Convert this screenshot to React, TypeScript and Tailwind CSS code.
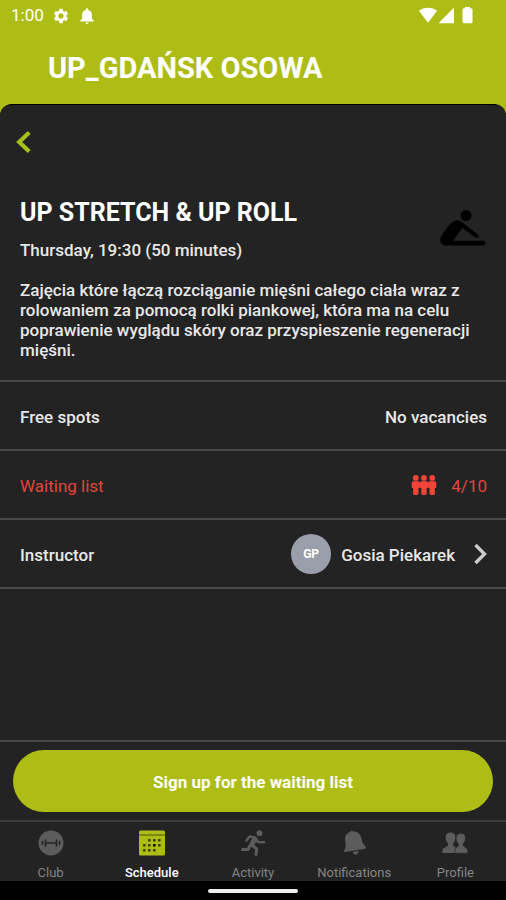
import type { ReactNode } from "react";
import clsx from "clsx";

// --- Icons ---
const GearIcon = () => (
  <svg viewBox="0 0 24 24" className="size-[18px]" fill="currentColor" aria-hidden="true">
    <path d="M19.14 12.94c.04-.3.06-.61.06-.94 0-.32-.02-.64-.07-.94l2.03-1.58a.49.49 0 0 0 .12-.61l-1.92-3.32a.49.49 0 0 0-.59-.22l-2.39.96c-.5-.38-1.03-.7-1.62-.94l-.36-2.54a.48.48 0 0 0-.48-.41h-3.84a.47.47 0 0 0-.47.41l-.36 2.54c-.59.24-1.13.57-1.62.94l-2.39-.96a.48.48 0 0 0-.59.22L2.74 8.87a.48.48 0 0 0 .12.61l2.03 1.58c-.05.3-.09.63-.09.94s.02.64.07.94l-2.03 1.58a.49.49 0 0 0-.12.61l1.92 3.32c.12.22.37.29.59.22l2.39-.96c.5.38 1.03.7 1.62.94l.36 2.54c.05.24.24.41.48.41h3.84c.24 0 .44-.17.47-.41l.36-2.54c.59-.24 1.13-.56 1.62-.94l2.39.96c.22.08.47 0 .59-.22l1.92-3.32a.48.48 0 0 0-.12-.61zM12 15.6A3.61 3.61 0 0 1 8.4 12c0-1.98 1.62-3.6 3.6-3.6s3.6 1.62 3.6 3.6-1.62 3.6-3.6 3.6z" />
  </svg>
);

const StatusBellIcon = () => (
  <svg viewBox="0 0 24 24" className="size-[18px]" fill="currentColor" aria-hidden="true">
    <path d="M12 22.500c1.200 0 2.200-.9 2.200-2H9.800c0 1.100 1 2 2.200 2zM18.500 15.500V10.500c0-3.200-1.800-5.700-4.800-6.400V3.500c0-.9-.8-1.700-1.700-1.700s-1.700.8-1.700 1.700v.6c-3 .7-4.800 3.200-4.800 6.400v5L3 18v1.300h18V18z" />
  </svg>
);

const SignalIcons = () => (
  <svg viewBox="0 0 56 18" className="h-[18px] w-14" fill="currentColor" aria-hidden="true">
    <path d="M0 4C5-.3 13-.3 18 4L9 15.800z" />
    <path d="M35 .5v15.800H19.500z" />
    <path d="M46 0h5v1.200h1q1.500 0 1.500 1.800v11.700q0 1.600-1.600 1.600h-6.800q-1.600 0-1.600-1.600V3q0-1.800 1.500-1.800h1z" />
  </svg>
);

const StretchIcon = () => (
  <svg viewBox="0 0 46 36" className="h-9 w-[46px] text-black" fill="currentColor" aria-hidden="true">
    <circle cx="26" cy="5.500" r="5.500" />
    <path d="M14.500 11q3.500-1.600 6.500.6L38 24.500q1.400 1.500.2 2.800t-3 .3L22.500 18 13 30.700h30.500q2 0 2 2.400T43.500 35.500H5.500Q2 35.500.8 32.500T1 26.500L9 15.200Q11.500 12.200 14.500 11z" />
  </svg>
);

const PeopleIcon = () => (
  <svg viewBox="0 0 26 20" className="h-5 w-[26px]" fill="currentColor" aria-hidden="true">
    {[4.8, 13, 21.2].map((x) => (
      <g key={x} transform={`translate(${x} 0)`}>
        <circle cx="0" cy="2.900" r="2.900" />
        <path d="M-2.600 6.300h5.200q1.500.2 1.500 2v3.600q0 1-.7 1h-.7v5.200q0 1.900-1.300 1.900H-1.400q-1.300 0-1.300-1.900v-5.200h-.7q-.7 0-.7-1V8.300q0-1.800 1.500-2z" />
      </g>
    ))}
  </svg>
);

const ClubIcon = () => (
  <svg viewBox="0 0 26 26" className="size-[26px]" aria-hidden="true">
    <circle cx="13" cy="13" r="12.500" fill="currentColor" />
    <path d="M4.500 11.500v3M7.500 10v6M18.500 10v6M21.500 11.500v3M7.500 13h11" stroke="#232323" strokeWidth="1.600" strokeLinecap="round" />
  </svg>
);

// Dots of the calendar: column and row
const calendarDots = [
  [2, 0], [3, 0], [4, 0],
  [1, 1], [2, 1], [3, 1], [4, 1],
  [1, 2], [2, 2], [3, 2],
];

const CalendarIcon = () => (
  <svg viewBox="0 0 26 26" className="size-[26px]" aria-hidden="true">
    <rect y=".5" width="26" height="25" rx="1.500" fill="currentColor" />
    <path d="M0 5h26" stroke="#4d560c" strokeWidth="1" />
    {calendarDots.map(([col, row]) => (
      <rect
        key={`${col}-${row}`}
        x={col * 5 - 1}
        y={9 + row * 5}
        width="2.600"
        height="2.600"
        rx=".6"
        fill={col === 3 && row === 1 ? "#000000" : "#39400c"}
      />
    ))}
  </svg>
);

const RunIcon = () => (
  <svg viewBox="0 0 26 26" className="size-[26px]" aria-hidden="true">
    <circle cx="19.500" cy="3.200" r="2.900" fill="currentColor" />
    <g fill="none" stroke="currentColor" strokeLinecap="round" strokeLinejoin="round">
      <path d="M6.500 10.500L9.500 6.500 15 7.500l3 4.500 6 .2" strokeWidth="2.500" />
      <path d="M14.500 9L12 14.500" strokeWidth="5" />
      <path d="M12.500 15.500l4.200 3.500-.7 5.500M10 15.500L8 19.500H2.500" strokeWidth="3" />
    </g>
  </svg>
);

const BellIcon = () => (
  <svg viewBox="0 0 26 26" className="size-[26px]" fill="currentColor" aria-hidden="true">
    <g transform="rotate(-10 13 13)">
      <path d="M12.500.6q1.700 0 2 1c4.300.7 6.700 3.900 6.700 8.400 0 4.700.8 6.500 2.500 8.200.7.700.4 2.300-.7 2.300H3c-1.100 0-1.400-1.600-.7-2.300 1.700-1.700 2.300-3.500 2.300-8.200 0-4.500 1.900-7.700 5.900-8.400q.3-1 2-1z" />
      <path d="M10 21.500h6q-.6 3.500-3 3.500t-3-3.500z" />
    </g>
  </svg>
);

const ProfileIcon = () => (
  <svg viewBox="0 0 26 26" className="size-[26px]" fill="currentColor" aria-hidden="true">
    <path d="M8.500 2.500c3.500 0 5 2.200 4.900 5.200-.1 2.500-1 4.500-2.200 5.700v2.200c.6 1 3 1.400 3 3.600V23H.5v-2.500c0-3.200 4.700-3.200 5.500-4.900v-2.200C4.800 12.200 3.800 10.200 3.700 7.700c-.1-3 1.300-5.200 4.800-5.200z" />
    <path d="M18.800 3.200c3.500 0 4.800 2.100 4.700 5.200-.1 2.400-1 4.200-2.200 5.300v2c.7 1.600 4.500 1.800 4.500 4.800V23.300H12.800v-2.800c0-2.800 2.900-3.200 3.500-4.800v-2c-1.200-1.100-2.100-2.900-2.200-5.300-.1-3.100 1.200-5.200 4.700-5.200z" stroke="#232323" strokeWidth=".6" />
  </svg>
);

// --- Helper Types & Data ---
interface Tab {
  label: string;
  icon: ReactNode;
}

const tabs: Tab[] = [
  { label: "Club", icon: <ClubIcon /> },
  { label: "Schedule", icon: <CalendarIcon /> },
  { label: "Activity", icon: <RunIcon /> },
  { label: "Notifications", icon: <BellIcon /> },
  { label: "Profile", icon: <ProfileIcon /> },
];

const ACTIVE_TAB = "Schedule";

const rowClass =
  "flex h-[69px] w-full items-center justify-between border-b-2 border-[#484848] pr-[19px] pl-5";

// --- Main Component ---
export default function App() {
  return (
    <div className="flex min-h-screen flex-col bg-[#adbd16] font-[Roboto,sans-serif] text-[17px] text-[#e8e8e8]">
      {/* Status bar */}
      <div className="flex h-8 items-center justify-between pr-[31px] pl-[11px] text-white">
        <div className="flex items-center gap-2">
          <span>1:00</span>
          <GearIcon />
          <StatusBellIcon />
        </div>
        <SignalIcons />
      </div>

      <header className="flex h-[72px] items-center px-12 pt-0.5 text-white">
        <h1 className="text-[29px] font-bold">UP_GDAŃSK OSOWA</h1>
      </header>

      <main className="flex flex-1 flex-col rounded-t-xl border-t border-black bg-[#232323]">
        <button type="button" aria-label="Back" className="mt-6 ml-4 w-fit text-[#a4c11b]">
          <svg viewBox="0 0 16 26" className="h-[26px] w-4" fill="none" stroke="currentColor" strokeWidth="4.200" aria-hidden="true">
            <path d="M13.200 3.500L3.200 13l10 9.500" />
          </svg>
        </button>

        <section className="border-b-2 border-[#484848] px-5 pt-[42px] pb-5">
          <div className="flex justify-between">
            <div>
              <h2 className="text-[25px] leading-8 font-bold text-white">UP STRETCH &amp; UP ROLL</h2>
              <p className="mt-[11px] leading-5 font-medium">Thursday, 19:30 (50 minutes)</p>
            </div>
            <div className="mt-[13px]">
              <StretchIcon />
            </div>
          </div>
          <p className="mt-5 leading-5 font-medium">
            Zajęcia które łączą rozciąganie mięśni całego ciała wraz z rolowaniem za pomocą rolki
            piankowej, która ma na celu poprawienie wyglądu skóry oraz przyspieszenie regeneracji
            mięśni.
          </p>
        </section>

        <div className={clsx(rowClass, "pt-1 font-medium")}>
          <span>Free spots</span>
          <span>No vacancies</span>
        </div>
        <div className={clsx(rowClass, "pt-1 text-[#e2453c]")}>
          <span>Waiting list</span>
          <span className="flex items-center gap-3.5">
            <span className="pb-1 text-[#f04438]">
              <PeopleIcon />
            </span>
            4/10
          </span>
        </div>
        <button type="button" className={clsx(rowClass, "font-medium")}>
          <span className="pt-1">Instructor</span>
          <span className="flex items-center">
            <span className="flex size-10 items-center justify-center rounded-full bg-[#9b9fab] text-xs font-bold text-white">
              GP
            </span>
            <span className="ml-2.5 pt-1">Gosia Piekarek</span>
            <svg viewBox="0 0 14 22" className="ml-[18px] h-[22px] w-3.5" fill="none" stroke="#cccccc" strokeWidth="3.400" aria-hidden="true">
              <path d="M2.500 2l9 9-9 9" />
            </svg>
          </span>
        </button>

        <div className="mt-auto border-t-2 border-[#484848] px-[13px] pt-2 pb-2">
          <button type="button" className="h-[62px] w-full rounded-full bg-[#adbd16] pt-1 font-bold text-white">
            Sign up for the waiting list
          </button>
        </div>
      </main>

      {/* Bottom tabs */}
      <nav className="grid h-[61px] grid-cols-5 border-t-2 border-[#3c3c3c] bg-[#232323]">
        {tabs.map(({ label, icon }) => (
          <a
            key={label}
            href="#"
            className={clsx(
              "flex flex-col items-center gap-2 pt-2 text-[13px] leading-[18px]",
              label === ACTIVE_TAB ? "font-medium text-white" : "text-[#848484]"
            )}
          >
            <span className={label === ACTIVE_TAB ? "text-[#adbd16]" : "text-[#5c5c5c]"}>{icon}</span>
            {label}
          </a>
        ))}
      </nav>

      <div className="flex h-[19px] items-center justify-center bg-black">
        <div className="h-1 w-[90px] rounded-full bg-[#eeeeee]" />
      </div>
    </div>
  );
}
